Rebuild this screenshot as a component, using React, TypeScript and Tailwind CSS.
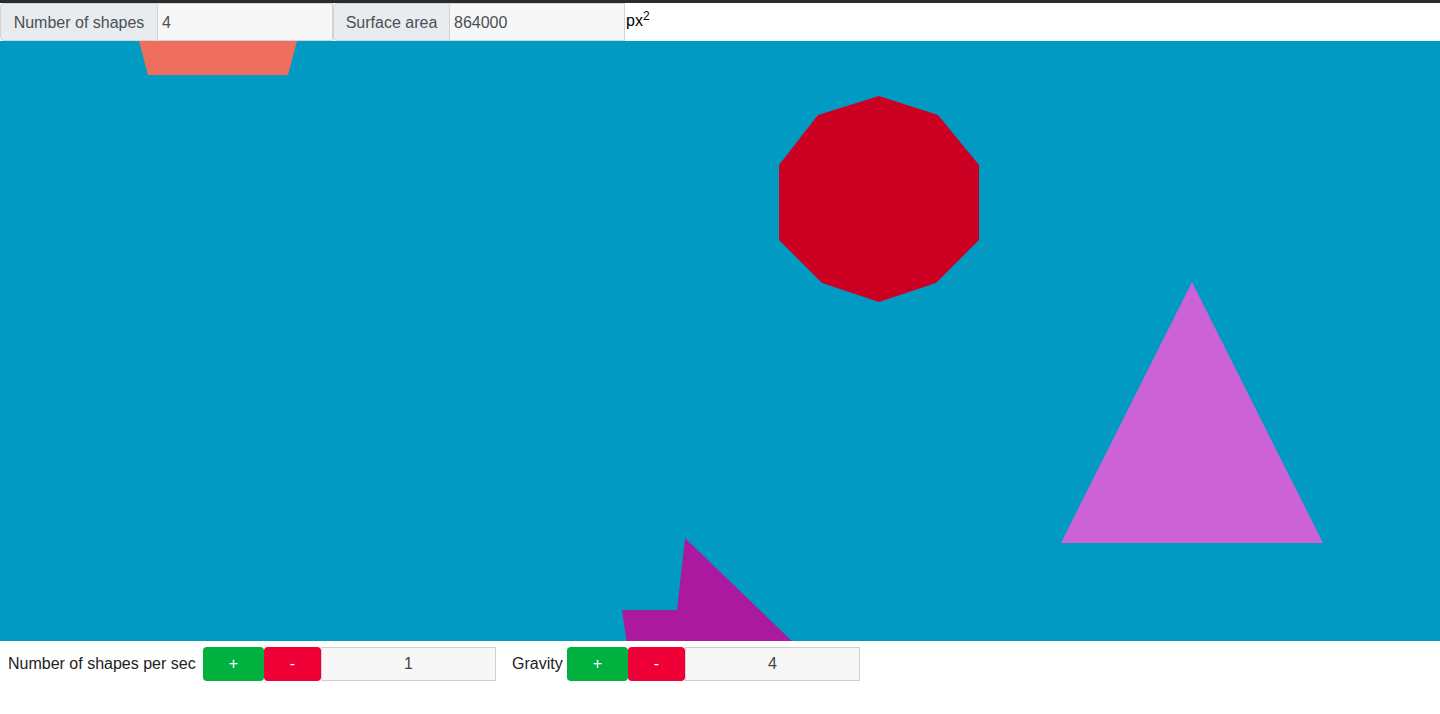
import React from 'react';

const font = { fontFamily: '"Liberation Sans", Arial, sans-serif' };

function InputGroup({ label, value, labelWidth }: { label: string; value: string; labelWidth: string }) {
  return (
    <div className="flex h-[38px]">
      <span
        className={`${labelWidth} flex items-center justify-center pt-[1px] bg-[#e9ecef] border border-[#ced4da] rounded-l-[4px] text-[16px] text-[#495057]`}
      >
        {label}
      </span>
      <input
        readOnly
        value={value}
        className="w-[175px] h-full px-[4px] pt-[1px] bg-[#f7f7f7] border border-l-0 border-[#ced4da] text-[16px] text-[#495057] outline-none"
      />
    </div>
  );
}

function Stepper({ label, value, labelWidth }: { label: string; value: string; labelWidth: string }) {
  return (
    <div className="flex items-center h-[34px]">
      <span className={`${labelWidth} text-[16px] text-[#222] whitespace-nowrap`}>{label}</span>
      <button className="w-[61px] h-full bg-[#00b140] text-white text-[16px] rounded-[4px]">+</button>
      <button className="w-[57px] h-full bg-[#ef0036] text-white text-[16px] rounded-[4px]">-</button>
      <input
        readOnly
        value={value}
        className="w-[175px] h-full bg-[#f7f7f7] border border-[#cfcfcf] text-center text-[16px] text-[#444] outline-none"
      />
    </div>
  );
}

export default function App() {
  return (
    <div className="w-[1440px] h-[714px] bg-white overflow-hidden" style={font}>
      <div className="h-[3px] bg-[#2b2b2b]" />
      <div className="flex items-start h-[38px]">
        <InputGroup label="Number of shapes" value="4" labelWidth="w-[158px]" />
        <InputGroup label="Surface area" value="864000" labelWidth="w-[117px]" />
        <span className="ml-[1px] mt-[6px] text-[16px] text-black">
          px<sup className="text-[12px]">2</sup>
        </span>
      </div>
      <div className="h-[600px] bg-[#009ac2]">
        <svg width="1440" height="600" viewBox="0 0 1440 600">
          <polygon points="139,0 297,0 288,34 148,34" fill="#ef6e5e" />
          <polygon
            points="879,55 938,74 979,124 979,199 936,242 879,261 822,242 779,199 779,124 818,74"
            fill="#cc0022"
          />
          <polygon points="1192,241 1323,502 1061,502" fill="#cd61d6" />
          <polygon points="685,497 796,604 627,604 622,569 677,569" fill="#ab199f" />
        </svg>
      </div>
      <div className="flex items-center mt-[6px] pl-[8px] gap-[16px]">
        <Stepper label="Number of shapes per sec" value="1" labelWidth="w-[195px]" />
        <Stepper label="Gravity" value="4" labelWidth="w-[55px]" />
      </div>
    </div>
  );
}
